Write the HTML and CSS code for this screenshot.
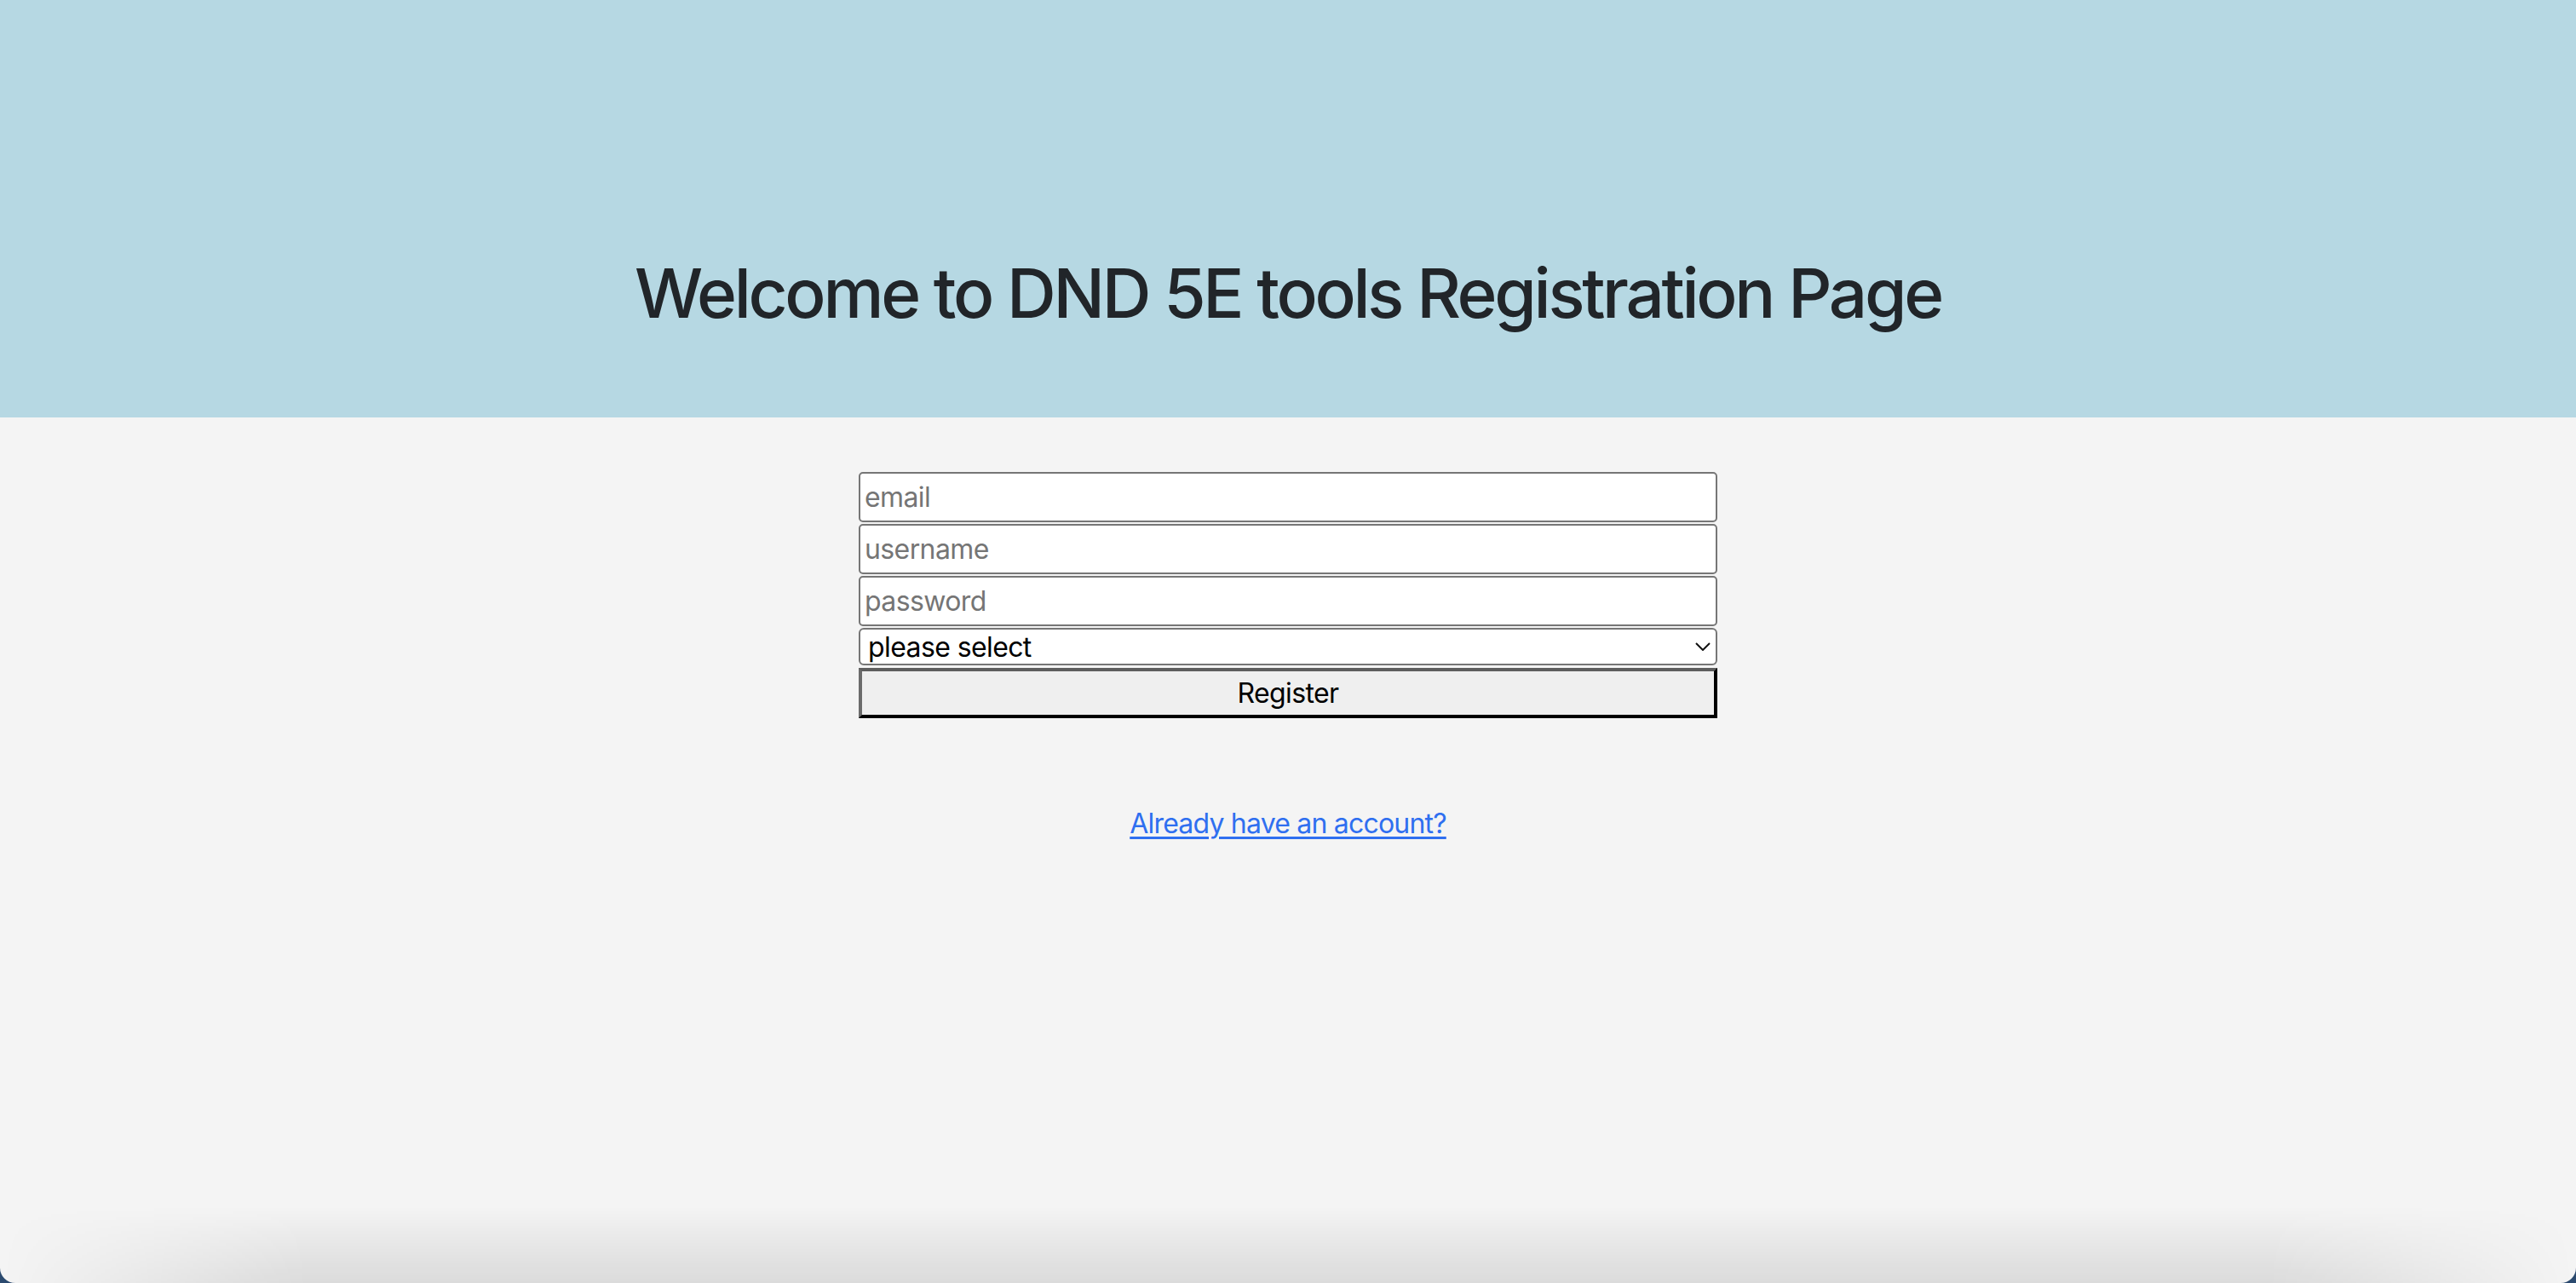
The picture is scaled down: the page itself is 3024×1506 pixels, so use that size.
FILE: index.html
```html
<!DOCTYPE html>
<html lang="en">
<head>
<meta charset="utf-8">
<title>DND 5E tools - Register</title>
<link rel="stylesheet" href="styles.css">
</head>
<body>
<header class="hero">
  <h1 class="title">Welcome to DND 5E tools Registration Page</h1>
</header>
<main class="content">
  <form class="reg-form">
    <input class="field" type="email" placeholder="email">
    <input class="field" type="text" placeholder="username">
    <input class="field" type="password" placeholder="password">
    <div class="select-wrap">
      <select class="picker">
        <option>please select</option>
      </select>
      <svg class="chev" width="18" height="10" viewBox="0 0 18 10" aria-hidden="true"><path d="M1 1 L9 9 L17 1" fill="none" stroke="#111" stroke-width="2"/></svg>
    </div>
    <button class="submit" type="button">Register</button>
  </form>
  <p class="login"><a class="login-link" href="#">Already have an account?</a></p>
</main>
<div class="window-shade"></div>
</body>
</html>
```
FILE: styles.css
```css
html {
  background: #2b4a6f;
}
body {
  margin: 0;
  min-height: 100vh;
  background: #f4f4f4;
  border-radius: 0 0 18px 18px;
  overflow: hidden;
  font-family: Inter, "Noto Sans", sans-serif;
  color: #212529;
}
.hero {
  background: #b6d8e3;
  padding: 296px 0 98px;
  text-align: center;
}
.title {
  margin: 0;
  font-size: 80px;
  font-weight: 500;
  line-height: 96px;
  letter-spacing: -3.3px;
  color: #212529;
}
.content {
  padding-top: 64px;
  display: flex;
  flex-direction: column;
  align-items: center;
}
.reg-form {
  width: 1008px;
  display: flex;
  flex-direction: column;
  gap: 2px;
}
.field {
  box-sizing: border-box;
  height: 59px;
  margin: 0;
  padding: 0 5px;
  border: 2px solid #767676;
  border-radius: 5px;
  background: #fff;
  font-family: Inter, "Noto Sans", sans-serif;
  font-size: 32px;
  letter-spacing: -0.6px;
  color: #000;
  outline: none;
}
.field::placeholder {
  color: #757575;
}
.select-wrap {
  position: relative;
  height: 44px;
  margin-bottom: 1px;
}
.picker {
  appearance: none;
  -webkit-appearance: none;
  box-sizing: border-box;
  width: 100%;
  height: 44px;
  margin: 0;
  padding: 0 40px 0 9px;
  border: 2px solid #767676;
  border-radius: 6px;
  background: #fff;
  font-family: Inter, "Noto Sans", sans-serif;
  font-size: 32px;
  letter-spacing: -0.6px;
  color: #000;
}
.chev {
  position: absolute;
  right: 8px;
  top: 17px;
  pointer-events: none;
}
.submit {
  box-sizing: border-box;
  height: 59px;
  margin: 0;
  border-style: solid;
  border-width: 4px;
  border-color: #5e5e5e #000 #000 #6b6b6b;
  background: #efefef;
  font-family: Inter, "Noto Sans", sans-serif;
  font-size: 32px;
  letter-spacing: -0.6px;
  color: #000;
}
.login {
  margin: 100px 0 0;
  font-size: 32px;
  line-height: 48px;
  letter-spacing: -0.8px;
}
.login-link {
  color: #2f6ff0;
  text-decoration: underline;
  text-underline-offset: 4px;
  text-decoration-thickness: 3px;
}
.window-shade {
  position: fixed;
  left: 0;
  right: 0;
  bottom: 0;
  height: 90px;
  background: linear-gradient(to bottom, rgba(0,0,0,0), rgba(0,0,0,0.1));
  -webkit-mask-image: linear-gradient(to right, transparent, #000 12%, #000 88%, transparent);
  mask-image: linear-gradient(to right, transparent, #000 12%, #000 88%, transparent);
  border-radius: 0 0 18px 18px;
  pointer-events: none;
}
```
